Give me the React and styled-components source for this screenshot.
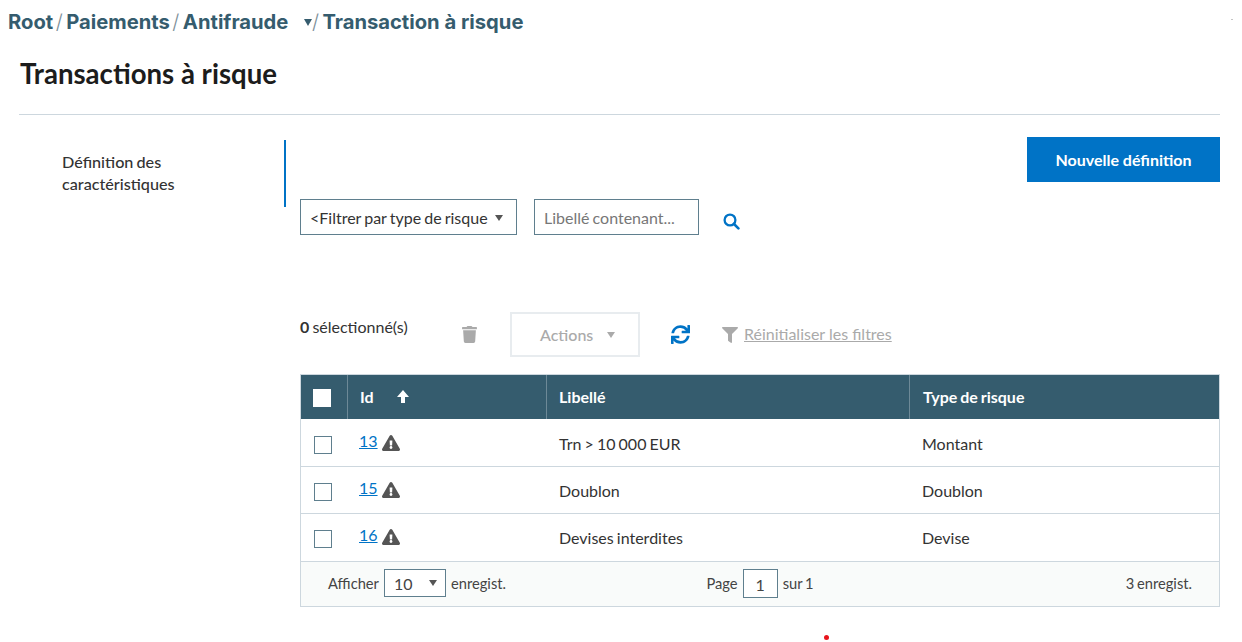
import React from "react";
import styled, { createGlobalStyle } from "styled-components";
import { FaExclamationTriangle, FaFilter, FaSync, FaTrash } from "react-icons/fa";

const GlobalStyle = createGlobalStyle`
  html, body {
    margin: 0;
    padding: 0;
    background: #fff;
    color: #333;
    font-family: "Lato", "Liberation Sans", sans-serif;
    word-spacing: -1px;
    overflow: hidden;
  }
`;

const Page = styled.div`
  position: relative;
  width: 1242px;
  height: 642px;
  overflow: hidden;
`;

const Breadcrumb = styled.nav`
  display: flex;
  align-items: center;
  height: 20px;
  padding: 11px 0 0 8px;
  font-family: "Inter", sans-serif;
  font-size: 20.2px;
  font-weight: 700;
  word-spacing: 0;
  color: #355c6e;
`;

const Crumb = styled.span`
  white-space: nowrap;
`;

const Slash = styled.span`
  margin: 0 3.5px 0 2.5px;
  font-weight: 300;
  color: #7d8f99;
`;

const CrumbCaret = styled.span`
  width: 0;
  height: 0;
  margin: 2px -3px 0 16px;
  border-left: 4.5px solid transparent;
  border-right: 4.5px solid transparent;
  border-top: 7px solid #355c6e;
`;

const Title = styled.h1`
  margin: 0 22px 0 19px;
  padding: 27px 0 24px 1px;
  height: 32px;
  line-height: 32px;
  border-bottom: 1px solid #cdd7de;
  font-size: 27.6px;
  font-weight: 700;
  word-spacing: 0;
  color: #1c1c1c;
  box-sizing: content-box;
`;

const Columns = styled.div`
  display: flex;
  margin: 0 22px 0 0;
`;

const Side = styled.aside`
  width: 284px;
  flex: none;
  padding-top: 25px;
`;

const SideItem = styled.div`
  height: 67px;
  width: 286px;
  box-sizing: border-box;
  padding: 11px 0 0 62px;
  border-right: 2px solid #0073c6;
  font-size: 16.2px;
  font-weight: 500;
  line-height: 22px;
  color: #333;
`;

const Main = styled.main`
  flex: 1;
  margin-left: 16px;
  padding-top: 22px;
`;

const TopRow = styled.div`
  display: flex;
  justify-content: flex-end;
`;

const PrimaryButton = styled.button`
  width: 193px;
  height: 45px;
  border: 0;
  padding: 0;
  background: #0073c6;
  color: #fff;
  font-family: inherit;
  font-size: 16px;
  font-weight: 700;
  word-spacing: 0;
`;

const FilterRow = styled.div`
  display: flex;
  align-items: flex-start;
  margin-top: 17px;
`;

const FilterSelect = styled.div`
  display: flex;
  align-items: center;
  justify-content: space-between;
  width: 217px;
  height: 36px;
  box-sizing: border-box;
  padding: 1px 13px 0 9px;
  border: 1px solid #5f7f8e;
  font-size: 16px;
  color: #333;
  white-space: nowrap;
`;

const Caret = styled.span`
  flex: none;
  width: 0;
  height: 0;
  border-left: 4.5px solid transparent;
  border-right: 4.5px solid transparent;
  border-top: 6px solid ${(p) => p.$color || "#555"};
`;

const FilterInput = styled.div`
  display: flex;
  align-items: center;
  width: 165px;
  height: 36px;
  box-sizing: border-box;
  margin-left: 17px;
  padding: 1px 0 0 9px;
  border: 1px solid #5f7f8e;
  font-size: 16px;
  color: #777;
  white-space: nowrap;
`;

const SearchButton = styled.span`
  display: flex;
  margin: 14px 0 0 24px;
  color: #0073c6;
`;

const Toolbar = styled.div`
  display: flex;
  align-items: center;
  height: 45px;
  margin-top: 77px;
`;

const SelectedCount = styled.div`
  width: 161px;
  flex: none;
  margin-top: -16px;
  font-size: 16px;
  color: #333;
  b {
    font-weight: 700;
  }
`;

const TrashIcon = styled.span`
  display: flex;
  width: 49px;
  flex: none;
  margin-top: -1px;
  color: #aaa;
  font-size: 17px;
`;

const ActionsButton = styled.div`
  display: flex;
  align-items: center;
  gap: 14px;
  width: 130px;
  height: 45px;
  box-sizing: border-box;
  padding-left: 28px;
  border: 2px solid #e8ecef;
  font-size: 16px;
  font-weight: 500;
  color: #aaa;
`;

const RefreshIcon = styled.span`
  display: flex;
  margin-left: 31px;
  color: #0073c6;
  font-size: 19px;
`;

const ResetFilters = styled.div`
  display: flex;
  align-items: center;
  margin: -2px 0 0 32px;
  color: #aaa;
  font-size: 16px;
  word-spacing: 0;
  svg {
    font-size: 16px;
    margin-right: 6px;
    margin-top: 3px;
  }
  span {
    text-decoration: underline;
  }
`;

const Table = styled.div`
  margin-top: 17px;
  border: 1px solid #cdd7de;
`;

const rowGrid = `
  display: grid;
  grid-template-columns: 47px 199px 363px 1fr;
`;

const HeadRow = styled.div`
  ${rowGrid}
  height: 44px;
  background: #355c6e;
  color: #fff;
  font-size: 16px;
  font-weight: 700;
`;

const HeadCell = styled.div`
  display: flex;
  align-items: center;
  padding: 0 0 2px 12px;
  border-right: 1px solid #6d8997;
  &:last-child {
    border-right: 0;
    padding-left: 13px;
  }
`;

const HeadCheck = styled.span`
  width: 18px;
  height: 18px;
  margin-top: 3px;
  background: #fff;
`;

const SortIcon = styled.svg`
  margin: 1px 0 0 23px;
`;

const BodyRow = styled.div`
  ${rowGrid}
  height: 47px;
  box-sizing: border-box;
  padding-top: 1px;
  border-top: ${(p) => (p.$first ? "0" : "1px solid #cdd7de")};
  font-size: 16px;
  color: #333;
`;

const BodyCell = styled.div`
  display: flex;
  align-items: center;
  padding-left: 12px;
`;

const Check = styled.span`
  width: 16px;
  height: 16px;
  margin: 3px 0 0 1px;
  border: 1px solid #5f7f8e;
  background: #fff;
`;

const IdLink = styled.a`
  margin: -6px 0 0 -1px;
  color: #0073c6;
  text-decoration: underline;
`;

const WarnIcon = styled.span`
  display: flex;
  margin: -1px 0 0 4px;
  color: #555;
  font-size: 18px;
`;

const Footer = styled.div`
  display: grid;
  grid-template-columns: 1fr auto 1fr;
  align-items: center;
  height: 45px;
  margin-top: 1px;
  box-sizing: border-box;
  padding: 0 27px 2px;
  border-top: 1px solid #cdd7de;
  background: #f9fbfa;
  font-size: 14.7px;
  color: #444;
`;

const FooterGroup = styled.div`
  display: flex;
  align-items: center;
  justify-content: ${(p) => p.$justify || "flex-start"};
  gap: 5px;
`;

const PageSize = styled.div`
  display: flex;
  align-items: center;
  justify-content: space-between;
  width: 62px;
  height: 28px;
  box-sizing: border-box;
  padding: 0 8px 0 9px;
  border: 1px solid #5f7f8e;
  background: #fff;
  font-size: 16px;
`;

const PageInput = styled.div`
  display: flex;
  align-items: center;
  justify-content: center;
  width: 35px;
  height: 29px;
  box-sizing: border-box;
  padding-top: 2px;
  border: 1px solid #5f7f8e;
  background: #fff;
  font-size: 16px;
`;

const RedDot = styled.span`
  position: absolute;
  left: 824px;
  top: 635px;
  width: 5px;
  height: 5px;
  border-radius: 50%;
  background: #e8141c;
`;

const Speck = styled.span`
  position: absolute;
  left: 1231px;
  top: 19px;
  width: 2px;
  height: 1px;
  background: #c4c4c4;
`;

const rows = [
  { id: 13, label: "Trn > 10 000 EUR", type: "Montant" },
  { id: 15, label: "Doublon", type: "Doublon" },
  { id: 16, label: "Devises interdites", type: "Devise" },
];

export default function App() {
  return (
    <Page>
      <GlobalStyle />
      <Breadcrumb>
        <Crumb>Root</Crumb>
        <Slash>/</Slash>
        <Crumb>Paiements</Crumb>
        <Slash>/</Slash>
        <Crumb>Antifraude</Crumb>
        <CrumbCaret />
        <Slash>/</Slash>
        <Crumb>Transaction à risque</Crumb>
      </Breadcrumb>
      <Title>Transactions à risque</Title>
      <Columns>
        <Side>
          <SideItem>
            Définition des
            <br />
            caractéristiques
          </SideItem>
        </Side>
        <Main>
          <TopRow>
            <PrimaryButton>Nouvelle définition</PrimaryButton>
          </TopRow>
          <FilterRow>
            <FilterSelect>
              &lt;Filtrer par type de risque
              <Caret />
            </FilterSelect>
            <FilterInput>Libellé contenant...</FilterInput>
            <SearchButton>
              <svg width="17" height="17" viewBox="0 0 17 17" fill="none" stroke="currentColor">
                <circle cx="7" cy="7" r="5.4" strokeWidth="2.3" />
                <line x1="11" y1="11" x2="15.4" y2="15.4" strokeWidth="2.6" strokeLinecap="round" />
              </svg>
            </SearchButton>
          </FilterRow>
          <Toolbar>
            <SelectedCount>
              <b>0</b> sélectionné(s)
            </SelectedCount>
            <TrashIcon>
              <FaTrash />
            </TrashIcon>
            <ActionsButton>
              Actions
              <Caret $color="#aaa" />
            </ActionsButton>
            <RefreshIcon>
              <FaSync />
            </RefreshIcon>
            <ResetFilters>
              <FaFilter />
              <span>Réinitialiser les filtres</span>
            </ResetFilters>
          </Toolbar>
          <Table>
            <HeadRow>
              <HeadCell>
                <HeadCheck />
              </HeadCell>
              <HeadCell>
                Id
                <SortIcon width="12" height="13" viewBox="0 0 12 13" fill="currentColor">
                  <path d="M6 0 L12 7 L8 7 L8 13 L4 13 L4 7 L0 7 Z" />
                </SortIcon>
              </HeadCell>
              <HeadCell>Libellé</HeadCell>
              <HeadCell>Type de risque</HeadCell>
            </HeadRow>
            {rows.map((row, i) => (
              <BodyRow key={row.id} $first={i === 0}>
                <BodyCell>
                  <Check />
                </BodyCell>
                <BodyCell>
                  <IdLink href="#">{row.id}</IdLink>
                  <WarnIcon>
                    <FaExclamationTriangle />
                  </WarnIcon>
                </BodyCell>
                <BodyCell>{row.label}</BodyCell>
                <BodyCell>{row.type}</BodyCell>
              </BodyRow>
            ))}
            <Footer>
              <FooterGroup>
                Afficher
                <PageSize>
                  10
                  <Caret />
                </PageSize>
                enregist.
              </FooterGroup>
              <FooterGroup>
                Page
                <PageInput>1</PageInput>
                sur 1
              </FooterGroup>
              <FooterGroup $justify="flex-end">3 enregist.</FooterGroup>
            </Footer>
          </Table>
        </Main>
      </Columns>
      <RedDot />
      <Speck />
    </Page>
  );
}
